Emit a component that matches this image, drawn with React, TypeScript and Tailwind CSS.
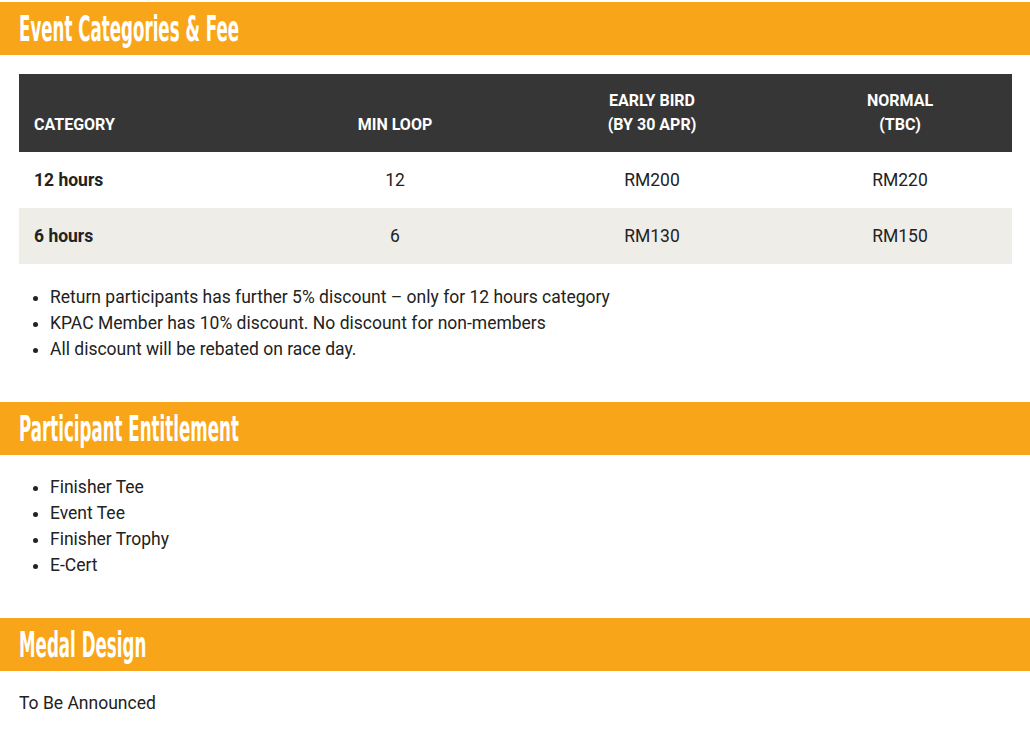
const heading =
  "inline-block origin-left scale-x-[0.515] text-[36px] font-bold leading-none text-white [font-family:'DejaVu_Sans_Condensed','DejaVu_Sans',sans-serif]";

function Bar({ title }: { title: string }) {
  return (
    <div className="flex h-[53px] items-center bg-[#f9a51a] px-[19px]">
      <h2 className={heading}>{title}</h2>
    </div>
  );
}

const rows = [
  { cat: "12 hours", loop: "12", early: "RM200", normal: "RM220", bg: "bg-white" },
  { cat: "6 hours", loop: "6", early: "RM130", normal: "RM150", bg: "bg-[#eeede8]" },
];

export default function App() {
  return (
    <div className="min-h-[734px] w-[1030px] bg-white pt-[2px] text-[17.5px] text-[#222] [font-family:Roboto,'Noto_Sans',sans-serif]">
      <Bar title="Event Categories & Fee" />

      <table className="mx-[19px] mt-[19px] w-[993px] border-collapse">
        <thead>
          <tr className="h-[78px] bg-[#363636] text-[16px] font-bold uppercase leading-[24px] text-white">
            <th className="w-[255px] px-[15px] pb-[15px] text-left align-bottom">Category</th>
            <th className="w-[242px] pb-[15px] text-center align-bottom">Min Loop</th>
            <th className="w-[272px] pb-[15px] text-center align-bottom">
              Early Bird
              <br />
              (By 30 Apr)
            </th>
            <th className="w-[224px] pb-[15px] text-center align-bottom">
              Normal
              <br />
              (TBC)
            </th>
          </tr>
        </thead>
        <tbody>
          {rows.map((r) => (
            <tr key={r.cat} className={`h-[56px] ${r.bg}`}>
              <td className="px-[15px] font-bold">{r.cat}</td>
              <td className="text-center">{r.loop}</td>
              <td className="text-center">{r.early}</td>
              <td className="text-center">{r.normal}</td>
            </tr>
          ))}
        </tbody>
      </table>

      <ul className="ml-[50px] mt-[20px] list-disc leading-[26px]">
        <li>Return participants has further 5% discount – only for 12 hours category</li>
        <li>KPAC Member has 10% discount. No discount for non-members</li>
        <li>All discount will be rebated on race day.</li>
      </ul>

      <div className="mt-[40px]">
        <Bar title="Participant Entitlement" />
      </div>
      <ul className="ml-[50px] mt-[19px] list-disc leading-[26px]">
        <li>Finisher Tee</li>
        <li>Event Tee</li>
        <li>Finisher Trophy</li>
        <li>E-Cert</li>
      </ul>

      <div className="mt-[40px]">
        <Bar title="Medal Design" />
      </div>
      <p className="ml-[19px] mt-[19px] leading-[26px]">To Be Announced</p>
    </div>
  );
}
